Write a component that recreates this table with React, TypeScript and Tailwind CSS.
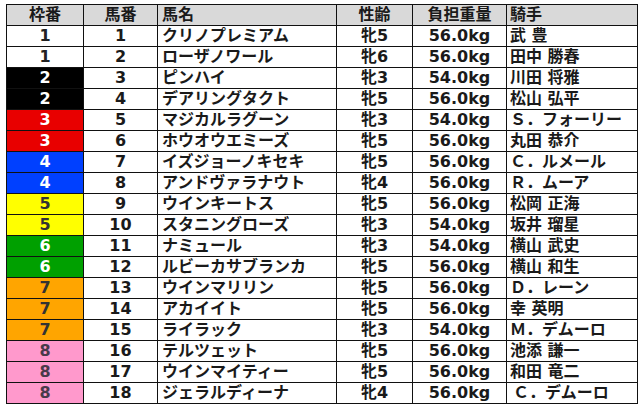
const rows: [number, number, string, string, string, string][] = [
  [1, 1, 'クリノプレミアム', '牝5', '56.0kg', '武 豊'],
  [1, 2, 'ローザノワール', '牝6', '56.0kg', '田中 勝春'],
  [2, 3, 'ピンハイ', '牝3', '54.0kg', '川田 将雅'],
  [2, 4, 'デアリングタクト', '牝5', '56.0kg', '松山 弘平'],
  [3, 5, 'マジカルラグーン', '牝3', '54.0kg', 'Ｓ．フォーリー'],
  [3, 6, 'ホウオウエミーズ', '牝5', '56.0kg', '丸田 恭介'],
  [4, 7, 'イズジョーノキセキ', '牝5', '56.0kg', 'Ｃ．ルメール'],
  [4, 8, 'アンドヴァラナウト', '牝4', '56.0kg', 'Ｒ．ムーア'],
  [5, 9, 'ウインキートス', '牝5', '56.0kg', '松岡 正海'],
  [5, 10, 'スタニングローズ', '牝3', '54.0kg', '坂井 瑠星'],
  [6, 11, 'ナミュール', '牝3', '54.0kg', '横山 武史'],
  [6, 12, 'ルビーカサブランカ', '牝5', '56.0kg', '横山 和生'],
  [7, 13, 'ウインマリリン', '牝5', '56.0kg', 'Ｄ．レーン'],
  [7, 14, 'アカイイト', '牝5', '56.0kg', '幸 英明'],
  [7, 15, 'ライラック', '牝3', '54.0kg', 'Ｍ．デムーロ'],
  [8, 16, 'テルツェット', '牝5', '56.0kg', '池添 謙一'],
  [8, 17, 'ウインマイティー', '牝5', '56.0kg', '和田 竜二'],
  [8, 18, 'ジェラルディーナ', '牝4', '56.0kg', 'Ｃ．デムーロ'],
]

// 枠の色
const frameStyle: Record<number, string> = {
  1: 'bg-white text-[#222]',
  2: 'bg-black text-white',
  3: 'bg-[#e80000] text-white',
  4: 'bg-[#0040ff] text-white',
  5: 'bg-[#ffff00] text-[#333]',
  6: 'bg-[#00a000] text-white',
  7: 'bg-[#ffa500] text-[#333]',
  8: 'bg-[#ff99cc] text-[#4a3a4a]',
}

const cell = 'border border-[#111] p-0 leading-none'

export default function App() {
  return (
    <div className="bg-white w-[643px] h-[409px] pt-[4px] pl-[6px] font-['DejaVu_Sans','Noto_Sans_CJK_JP',sans-serif] font-bold text-[16px] text-[#1a1a1a]">
      <table className="table-fixed border-collapse w-[631px]">
        <colgroup>
          <col className="w-[77px]" />
          <col className="w-[74px]" />
          <col className="w-[179px]" />
          <col className="w-[76px]" />
          <col className="w-[94px]" />
          <col className="w-[131px]" />
        </colgroup>
        <thead>
          <tr className="h-[21px] bg-[#d9d9d9]">
            <th className={`${cell} text-center`}>枠番</th>
            <th className={`${cell} text-center`}>馬番</th>
            <th className={`${cell} text-left pl-[4px]`}>馬名</th>
            <th className={`${cell} text-center`}>性齢</th>
            <th className={`${cell} text-center`}>負担重量</th>
            <th className={`${cell} text-left pl-[3px]`}>騎手</th>
          </tr>
        </thead>
        <tbody>
          {rows.map(([frame, num, name, sex, weight, jockey]) => (
            <tr key={num} className="h-[21px]">
              <td className={`${cell} text-center ${frameStyle[frame]}`}>{frame}</td>
              <td className={`${cell} text-center`}>{num}</td>
              <td className={`${cell} text-left pl-[4px] whitespace-nowrap`}>{name}</td>
              <td className={`${cell} text-center`}>{sex}</td>
              <td className={`${cell} text-center`}>{weight}</td>
              <td className={`${cell} text-left whitespace-nowrap ${num === 18 ? 'pl-[6px]' : 'pl-[3px]'}`}>{jockey}</td>
            </tr>
          ))}
        </tbody>
      </table>
    </div>
  )
}
